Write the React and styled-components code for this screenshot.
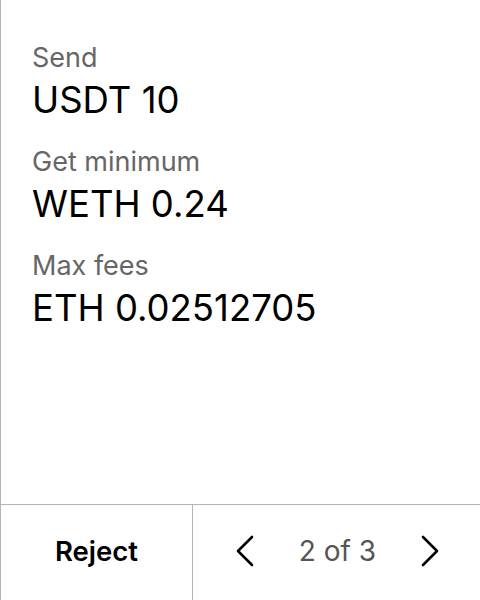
import React from "react";
import styled, { createGlobalStyle } from "styled-components";

const GlobalStyle = createGlobalStyle`
  html, body {
    margin: 0;
    padding: 0;
    background: #fff;
  }
  body {
    font-family: Inter, "Noto Sans", sans-serif;
  }
`;

const rows = [
  { label: "Send", value: "USDT 10" },
  { label: "Get minimum", value: "WETH 0.24" },
  { label: "Max fees", value: "ETH 0.02512705" },
];

export default function App() {
  return (
    <>
      <GlobalStyle />
      <Frame>
        <Content>
          {rows.map((r) => (
            <Row key={r.label}>
              <Label>{r.label}</Label>
              <Value>{r.value}</Value>
            </Row>
          ))}
        </Content>
        <Footer>
          <RejectButton>Reject</RejectButton>
          <Pager>
            <ArrowButton aria-label="Previous">
              <Chevron dir="left" />
            </ArrowButton>
            <PageText>2 of 3</PageText>
            <ArrowButton aria-label="Next">
              <Chevron dir="right" />
            </ArrowButton>
          </Pager>
        </Footer>
      </Frame>
    </>
  );
}

function Chevron({ dir }) {
  const d = dir === "left" ? "M16 2 L2 16 L16 30" : "M2 2 L16 16 L2 30";
  return (
    <svg width="18" height="32" viewBox="0 0 18 32" fill="none">
      <path d={d} stroke="#000" strokeWidth="2.6" strokeLinecap="round" strokeLinejoin="round" />
    </svg>
  );
}

const Frame = styled.div`
  width: 480px;
  height: 600px;
  box-sizing: border-box;
  border-left: 1px solid #b4b4b4;
  display: flex;
  flex-direction: column;
`;

const Content = styled.div`
  flex: 1;
  padding: 40px 0 0 31px;
  display: flex;
  flex-direction: column;
  gap: 20px;
`;

const Row = styled.div`
  display: flex;
  flex-direction: column;
`;

const Label = styled.div`
  font-size: 27px;
  line-height: 36px;
  color: #666;
`;

const Value = styled.div`
  font-size: 36.5px;
  line-height: 48px;
  color: #000;
`;

const Footer = styled.div`
  height: 96px;
  box-sizing: border-box;
  border-top: 1px solid #b4b4b4;
  display: grid;
  grid-template-columns: 192px 1fr;
  padding-bottom: 3px;
`;

const RejectButton = styled.div`
  display: flex;
  align-items: center;
  justify-content: center;
  border-right: 1px solid #b4b4b4;
  margin-bottom: -3px;
  padding-bottom: 3px;
  font-size: 27.5px;
  font-weight: 600;
  color: #000;
`;

const Pager = styled.div`
  display: flex;
  align-items: center;
  justify-content: space-between;
  padding: 0 41px 0 43px;
`;

const ArrowButton = styled.div`
  display: flex;
  align-items: center;
`;

const PageText = styled.div`
  font-size: 28px;
  color: #555;
`;
